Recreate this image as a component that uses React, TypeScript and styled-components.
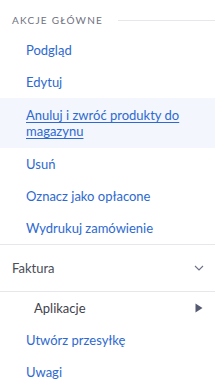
import { createGlobalStyle } from 'styled-components'
import styled from 'styled-components'

const GlobalStyle = createGlobalStyle`
  body {
    margin: 0;
    background: #fff;
    font-family: 'Lato', 'Noto Sans', sans-serif;
  }
`

const mainActions = ['Podgląd', 'Edytuj']
const moreActions = ['Usuń', 'Oznacz jako opłacone', 'Wydrukuj zamówienie']
const tailActions = ['Utwórz przesyłkę', 'Uwagi']

const App = () => {
  return (
    <Panel>
      <GlobalStyle />
      <SectionHeader>
        <SectionTitle>Akcje główne</SectionTitle>
        <HeaderLine />
      </SectionHeader>
      {mainActions.map((label) => (
        <ActionItem key={label}>{label}</ActionItem>
      ))}
      <ActionItem active>Anuluj i zwróć produkty do magazynu</ActionItem>
      {moreActions.map((label) => (
        <ActionItem key={label}>{label}</ActionItem>
      ))}
      <Divider />
      <GroupRow>
        <GroupLabel>Faktura</GroupLabel>
        <svg width="10" height="6" viewBox="0 0 10 6" fill="none">
          <path d="M1 1l4 4 4-4" stroke="#6b7189" strokeWidth="1.1" />
        </svg>
      </GroupRow>
      <Divider />
      <SubRow>
        <SubLabel>Aplikacje</SubLabel>
        <svg width="8" height="10" viewBox="0 0 8 10">
          <path d="M0.5 0.5L7.5 5L0.5 9.5Z" fill="#545a70" />
        </svg>
      </SubRow>
      {tailActions.map((label) => (
        <ActionItem key={label}>{label}</ActionItem>
      ))}
    </Panel>
  )
}

const Panel = styled.div`
  width: 215px;
  display: flex;
  flex-direction: column;
`

const SectionHeader = styled.div`
  height: 28px;
  margin-top: 6px;
  display: flex;
  align-items: center;
  gap: 15px;
  padding-left: 12px;
`

const SectionTitle = styled.span`
  font-size: 10px;
  letter-spacing: 1.25px;
  text-transform: uppercase;
  color: #6e7180;
  white-space: nowrap;
`

const HeaderLine = styled.div`
  flex: 1;
  height: 1px;
  background: #e6e7ea;
`

const ActionItem = styled.a<{ active?: boolean }>`
  display: block;
  padding: ${(p) => (p.active ? '9px 20px 9px 26px' : '8px 20px 8px 26px')};
  font-size: 13px;
  line-height: 16px;
  color: #2d69d0;
  background: ${(p) => (p.active ? '#f3f7fd' : 'transparent')};
  text-decoration: ${(p) => (p.active ? 'underline' : 'none')};
  text-underline-offset: 2px;
  cursor: pointer;
`

const Divider = styled.div`
  height: 1px;
  background: #e6e7ea;
`

const GroupRow = styled.div`
  height: 46px;
  display: flex;
  align-items: center;
  justify-content: space-between;
  padding: 0 11px 0 12px;
`

const GroupLabel = styled.span`
  font-size: 13px;
  color: #4a4d57;
`

const SubRow = styled.div`
  height: 32px;
  display: flex;
  align-items: center;
  justify-content: space-between;
  padding: 0 12px 0 34px;
`

const SubLabel = styled.span`
  font-size: 13px;
  color: #3f424b;
`

export default App
